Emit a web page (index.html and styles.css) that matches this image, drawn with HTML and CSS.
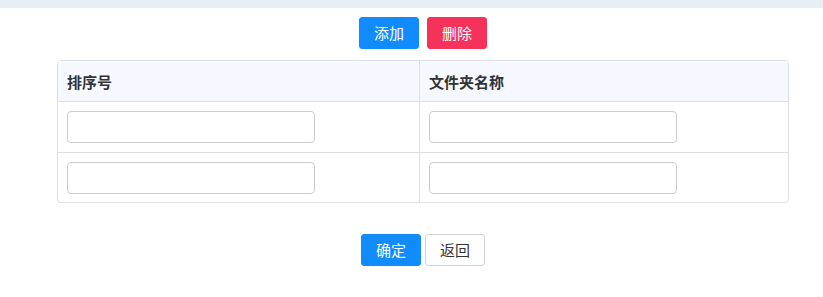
FILE: index.html
```html
<!DOCTYPE HTML>
<html>
<head>
	<meta http-equiv="Content-Type" content="text/html; charset=utf-8">
	<title>文件夹设置</title>
	<link rel="stylesheet" href="styles.css">
</head>
<body>
	<div class="topbar"></div>
	<div class="wrap">
		<div class="toolbar">
			<button type="button" class="btn btn-blue">添加</button>
			<button type="button" class="btn btn-red">删除</button>
		</div>
		<table class="grid">
			<thead>
				<tr>
					<th class="col-sort">排序号</th>
					<th>文件夹名称</th>
				</tr>
			</thead>
			<tbody>
				<tr>
					<td><input type="text" class="field"></td>
					<td><input type="text" class="field"></td>
				</tr>
				<tr>
					<td><input type="text" class="field"></td>
					<td><input type="text" class="field"></td>
				</tr>
			</tbody>
		</table>
		<div class="footer">
			<button type="button" class="btn btn-blue">确定</button>
			<button type="button" class="btn btn-plain">返回</button>
		</div>
	</div>
</body>
</html>
```
FILE: styles.css
```css
body {
margin: 0;
padding: 0;
background: #fff;
font-family: "Noto Sans CJK SC", "Noto Sans", sans-serif;
color: #333;
}
.topbar {
height: 8px;
background: #e8eef6;
}
.wrap {
padding: 0 34px 0 57px;
}
.toolbar {
display: flex;
justify-content: center;
gap: 8px;
margin-top: 9px;
margin-bottom: 11px;
}
.btn {
height: 32px;
padding: 0 14px;
font-family: inherit;
font-size: 15px;
line-height: 30px;
border: 1px solid transparent;
border-radius: 3px;
cursor: pointer;
}
.btn-blue {
background: #108cff;
border-color: #108cff;
color: #fff;
}
.btn-red {
background: #f7325a;
border-color: #f7325a;
color: #fff;
}
.btn-plain {
background: #fff;
border-color: #d2d2d2;
color: #333;
}
.grid {
width: 100%;
border: 1px solid #dddfe3;
border-radius: 4px;
border-spacing: 0;
border-collapse: separate;
}
.grid th {
height: 40px;
padding: 0 9px;
text-align: left;
font-size: 15px;
font-weight: bold;
background: #f5f9ff;
border-bottom: 1px solid #dddfe3;
}
.grid .col-sort {
width: 343px;
}
.grid th:first-child,
.grid td:first-child {
border-right: 1px solid #dddfe3;
}
.grid td {
padding: 9px;
line-height: 0;
}
.grid tbody tr:first-child td {
border-bottom: 1px solid #dddfe3;
}
.grid tbody tr:last-child td {
padding-bottom: 8px;
}
.field {
box-sizing: border-box;
width: 248px;
height: 32px;
border: 1px solid #cccccc;
border-radius: 4px;
padding: 0 8px;
font-size: 14px;
outline: none;
}
.footer {
display: flex;
justify-content: center;
gap: 4px;
margin-top: 31px;
}
```
